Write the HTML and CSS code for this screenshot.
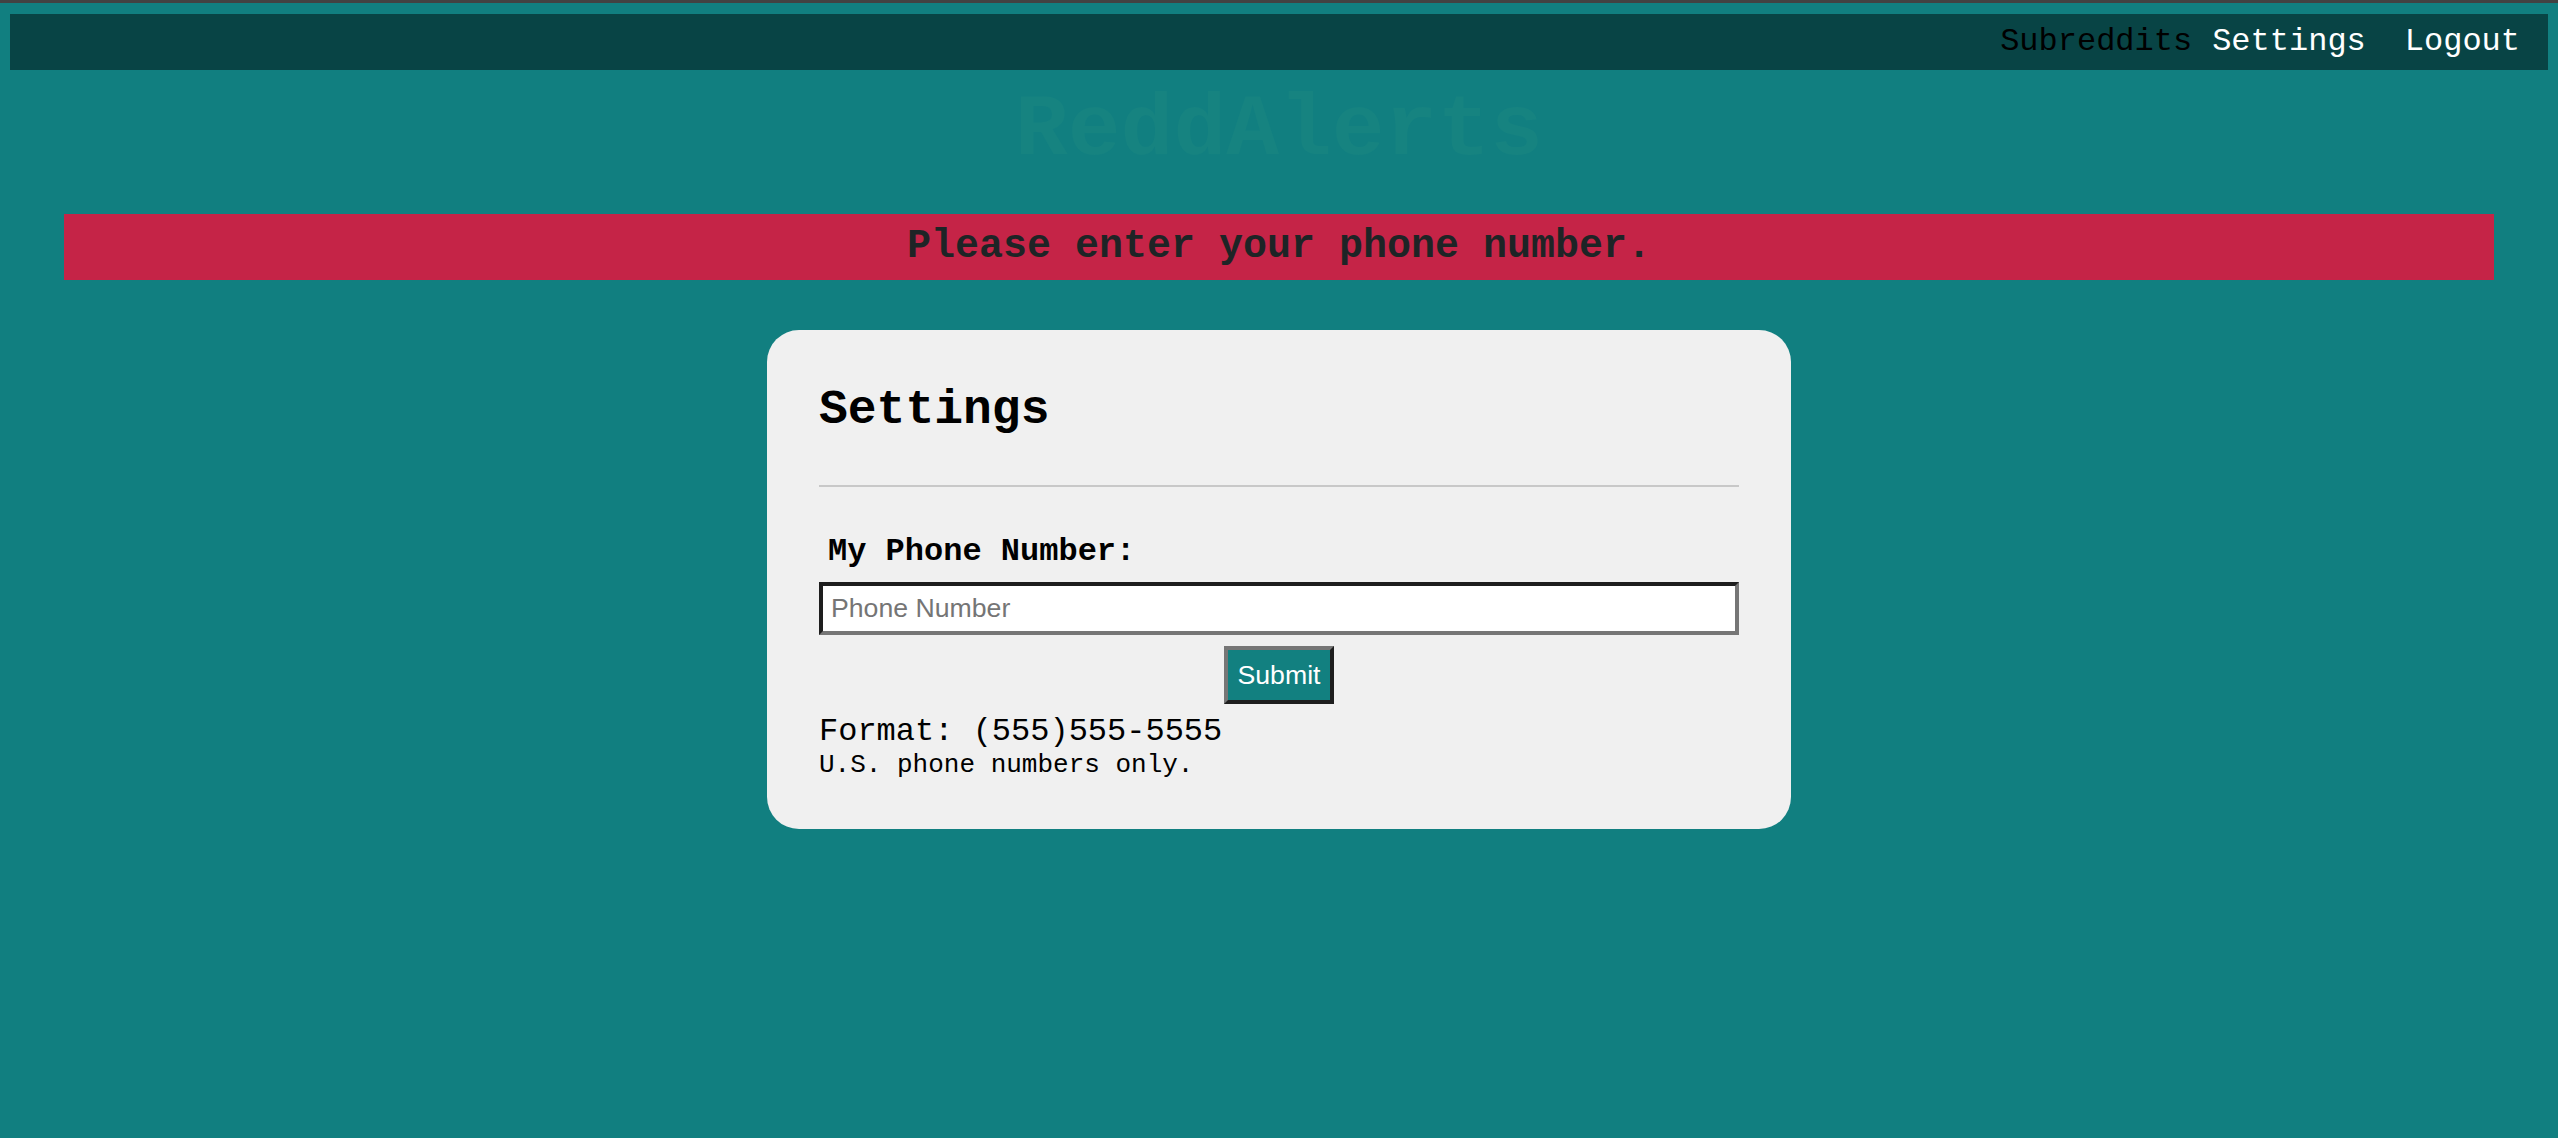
FILE: index.html
```html
<!DOCTYPE html>
<html lang="en">
<head>
<meta charset="utf-8">
<title>ReddAlerts - Settings</title>
<link rel="stylesheet" href="styles.css">
</head>
<body>
<div class="page">
  <nav class="navbar">
    <a class="nav-link nav-dark" href="#">Subreddits</a>
    <a class="nav-link nav-settings" href="#">Settings</a>
    <a class="nav-link nav-logout" href="#">Logout</a>
  </nav>
  <h1 class="brand">ReddAlerts</h1>
  <div class="alert">Please enter your phone number.</div>
  <div class="card">
    <h2 class="card-title">Settings</h2>
    <hr class="divider">
    <form class="phone-form">
      <label class="field-label" for="phone">My Phone Number:</label>
      <input class="field-input" id="phone" type="text" placeholder="Phone Number">
      <div class="submit-row"><button class="submit-btn" type="button">Submit</button></div>
    </form>
    <p class="format">Format: (555)555-5555</p>
    <p class="note">U.S. phone numbers only.</p>
  </div>
</div>
</body>
</html>
```

FILE: styles.css
```css
html, body {
  margin: 0;
  padding: 0;
  background: #117f80;
}
body {
  border-top: 3px solid #424242;
  font-family: "Liberation Mono", "Courier New", monospace;
}
.page {
  padding: 11px 10px 0;
}
.navbar {
  height: 56px;
  background: #084445;
  display: flex;
  justify-content: flex-end;
  align-items: center;
  padding-right: 28px;
}
.nav-link {
  font-size: 32px;
  line-height: 1;
  color: #ffffff;
  text-decoration: none;
}
.nav-dark {
  color: #000000;
}
.nav-settings {
  margin-left: 20px;
}
.nav-logout {
  margin-left: 39px;
}
.brand {
  margin: 11px 0 0;
  text-align: center;
  font-size: 88px;
  font-weight: bold;
  line-height: normal;
  color: #168380;
}
.alert {
  margin: 34px 54px 0;
  box-sizing: border-box;
  background: #c52447;
  color: #1e2426;
  text-align: center;
  font-size: 40px;
  font-weight: bold;
  line-height: normal;
  padding: 10px 0 11px;
}
.card {
  width: 1024px;
  box-sizing: border-box;
  margin: 50px auto 0;
  background: #f0f0f0;
  border-radius: 32px;
  padding: 53px 52px 49px;
}
.card-title {
  margin: 0;
  font-size: 48px;
  font-weight: bold;
  line-height: normal;
  color: #000;
}
.divider {
  margin: 48px 0 0;
  border: 0;
  border-top: 2px solid #c8c8c8;
  height: 0;
}
.phone-form {
  display: flex;
  flex-direction: column;
  margin-top: 46px;
}
.field-label {
  font-size: 32px;
  font-weight: bold;
  line-height: normal;
  padding-left: 9px;
  color: #000;
}
.field-input {
  margin-top: 12px;
  box-sizing: border-box;
  width: 100%;
  height: 53px;
  border-style: solid;
  border-width: 4px;
  border-color: #1e1e1e #767676 #767676 #1e1e1e;
  background: #fff;
  font-family: "Liberation Sans", Arial, sans-serif;
  font-size: 26.67px;
  padding: 0 8px;
  outline: none;
}
.field-input::placeholder {
  color: #757575;
}
.submit-row {
  display: flex;
  justify-content: center;
  margin-top: 11px;
}
.submit-btn {
  box-sizing: border-box;
  height: 58px;
  padding: 0 10px;
  background: #128080;
  color: #fff;
  font-family: "Liberation Sans", Arial, sans-serif;
  font-size: 26.67px;
  border-style: solid;
  border-width: 4px;
  border-color: #767676 #1e1e1e #1e1e1e #767676;
}
.format {
  margin: 9px 0 0;
  font-size: 32px;
  line-height: normal;
  color: #000;
}
.note {
  margin: 0;
  font-size: 26px;
  line-height: normal;
  color: #000;
}
```
